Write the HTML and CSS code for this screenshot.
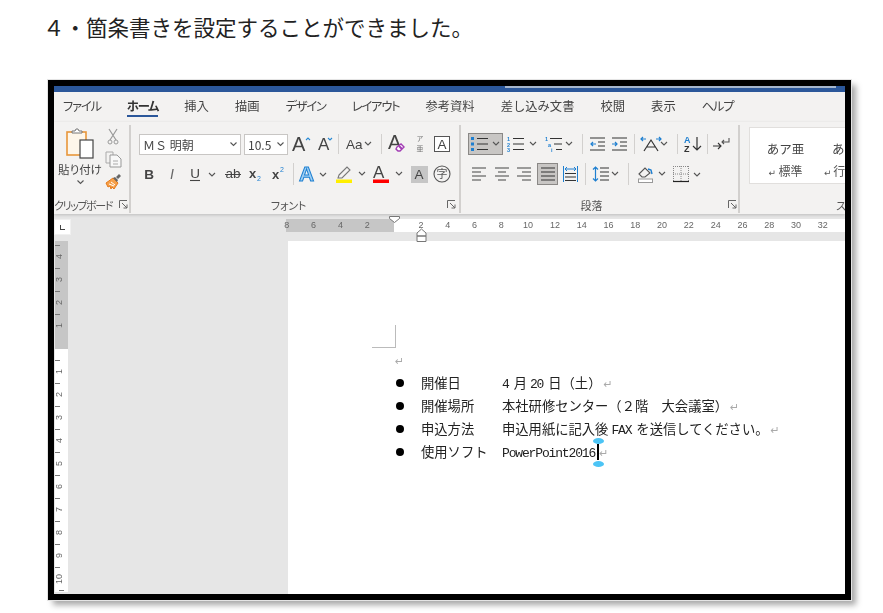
FILE: index.html
```html
<!doctype html>
<html lang="ja">
  <head>
    <meta charset="UTF-8" />
    <title>箇条書きの設定</title>
    <link rel="stylesheet" href="styles.css">
  </head>
  <body>
    <svg class="defs" width="0" height="0" aria-hidden="true">
      <defs>
        <path id="chev" d="M0 0l3 3 3-3" fill="none" stroke="#555" stroke-width="1.1" />
      </defs>
    </svg>

    <h1 class="step">４・箇条書きを設定することができました。</h1>

    <div class="window">
      <div class="window-body">
        <div class="titlebar"><div class="title-strip"></div></div>

        <nav class="tabs">
          <span class="kana">ファイル</span>
          <span class="kana tab-active">ホーム</span>
          <span>挿入</span>
          <span>描画</span>
          <span class="kana">デザイン</span>
          <span class="kana">レイアウト</span>
          <span>参考資料</span>
          <span>差し込み文書</span>
          <span>校閲</span>
          <span>表示</span>
          <span class="kana">ヘルプ</span>
        </nav>

        <div class="ribbon">
          <section class="group group-clip">
            <div class="clip-tools">
              <div class="paste">
                <svg width="28" height="31" viewBox="0 0 28 31">
                  <rect x="1" y="4" width="19" height="23" fill="#fdf6ea" stroke="#e8963a" stroke-width="1.6" />
                  <path d="M6 5V3h3l1-2h2l1 2h3v2z" fill="#fff" stroke="#777" />
                  <rect x="14" y="12" width="13" height="18" fill="#fff" stroke="#444" stroke-width="1.2" />
                </svg>
                <span class="paste-label">貼り付け</span>
                <svg width="7" height="5" viewBox="0 0 7 5"><use href="#chev" x="0.5" y="0.5" /></svg>
              </div>
              <div class="clip-small">
                <svg width="12" height="17" viewBox="0 0 12 17">
                  <path d="M2 1l7 11M10 1L3 12" fill="none" stroke="#9a9a9a" stroke-width="1.2" />
                  <circle cx="3" cy="14" r="2" fill="none" stroke="#9a9a9a" />
                  <circle cx="9" cy="14" r="2" fill="none" stroke="#9a9a9a" />
                </svg>
                <svg width="17" height="17" viewBox="0 0 17 17">
                  <path d="M5 12H1V1h7v3" fill="none" stroke="#aaa" />
                  <path d="M5 4h7l4 4v8H5z" fill="#f8f8f8" stroke="#999" />
                  <path d="M8 10h5M8 13h5" stroke="#aaa" />
                </svg>
                <svg width="17" height="16" viewBox="0 0 17 16">
                  <path d="M1 9l7-5 5 5-4 6-2-2-1 2-1-3-2 1z" fill="#f5a04a" stroke="#e67a1a" stroke-width="1" />
                  <path d="M4 10l5 2M6 8l4 3" stroke="#fff" />
                  <path d="M8 4l2-1 3 3-1 2zM11 3l3-3 2 2-3 3z" fill="#666" />
                </svg>
              </div>
            </div>
            <footer class="group-foot">
              <span></span>
              <span class="group-name name-clip">クリップボード</span>
              <svg class="launcher" width="9" height="9" viewBox="0 0 9 9"><path d="M.5 8V.5H8M3 3l5 5M8 4.5V8H4.5" fill="none" stroke="#666" /></svg>
            </footer>
          </section>

          <section class="group group-font">
            <div class="tool-row font-row-a">
              <div class="combo combo-font"><span>ＭＳ 明朝</span><svg width="7" height="5" viewBox="0 0 7 5"><use href="#chev" x="0.5" y="0.5" /></svg></div>
              <div class="combo combo-size"><span>10.5</span><svg width="7" height="5" viewBox="0 0 7 5"><use href="#chev" x="0.5" y="0.5" /></svg></div>
              <svg width="20" height="18" viewBox="0 0 20 18">
                <text x="0" y="16" class="glyph-lg">A</text>
                <path d="M14 5l2-2 2 2" fill="none" stroke="#2a8ad4" stroke-width="1.1" />
              </svg>
              <svg width="15" height="16" viewBox="0 0 15 16">
                <text x="0" y="14" class="glyph-md">A</text>
                <path d="M10 2l2 2 2-2" fill="none" stroke="#2a8ad4" stroke-width="1.1" />
              </svg>
              <i class="sep"></i>
              <svg width="26" height="16" viewBox="0 0 26 16">
                <text x="0" y="13" class="glyph-sm">Aa</text>
                <use href="#chev" x="19" y="6" />
              </svg>
              <i class="sep"></i>
              <svg width="17" height="18" viewBox="0 0 17 18">
                <text x="0" y="14" class="glyph-lg">A</text>
                <path d="M9 12l4-3 3 3-4 4h-2l-2-2z" fill="#fff" stroke="#a23cb4" stroke-width="1.4" />
                <path d="M11 11l3 3" stroke="#a23cb4" stroke-width="2" />
              </svg>
              <svg width="10" height="18" viewBox="0 0 10 18">
                <text x="5" y="6" class="glyph-ruby">ア</text>
                <text x="5" y="16" class="glyph-ruby">亜</text>
              </svg>
              <svg width="16" height="16" viewBox="0 0 16 16">
                <rect x=".5" y=".5" width="15" height="15" fill="#fff" stroke="#555" />
                <text x="8" y="12.5" class="glyph-sm glyph-mid">A</text>
              </svg>
            </div>
            <div class="tool-row font-row-b">
              <b class="glyph-b">B</b>
              <i class="glyph-i">I</i>
              <svg width="28" height="18" viewBox="0 0 28 18">
                <text x="7" y="13" class="glyph-sm glyph-mid">U</text>
                <path d="M2 15.5h10" stroke="#444" stroke-width="1.1" />
                <use href="#chev" x="21" y="8" />
              </svg>
              <svg width="16" height="14" viewBox="0 0 16 14">
                <text x="8" y="11" class="glyph-sm glyph-mid">ab</text>
                <path d="M0 7.5h16" stroke="#444" />
              </svg>
              <svg width="14" height="16" viewBox="0 0 14 16">
                <text x="0" y="12" class="glyph-x">x</text>
                <text x="8" y="15" class="glyph-idx">2</text>
              </svg>
              <svg width="13" height="16" viewBox="0 0 13 16">
                <text x="0" y="13" class="glyph-x">x</text>
                <text x="8" y="6" class="glyph-idx">2</text>
              </svg>
              <i class="sep sep-tall"></i>
              <svg width="28" height="18" viewBox="0 0 28 18">
                <text x="0" y="16" class="glyph-effect">A</text>
                <use href="#chev" x="21" y="8" />
              </svg>
              <svg width="29" height="18" viewBox="0 0 29 18">
                <path d="M3 10l8-8 3 3-8 8H2z" fill="none" stroke="#777" stroke-width="1.1" />
                <rect x="0" y="14.5" width="16" height="3.5" fill="#ffef00" />
                <use href="#chev" x="23" y="7" />
              </svg>
              <svg width="29" height="18" viewBox="0 0 29 18">
                <text x="0" y="13" class="glyph-thin">A</text>
                <rect x="0" y="14.5" width="16" height="3.5" fill="#f00" />
                <use href="#chev" x="23" y="7" />
              </svg>
              <span class="glyph-shade">A</span>
              <svg width="18" height="18" viewBox="0 0 18 18">
                <circle cx="9" cy="9" r="8" fill="none" stroke="#555" stroke-width="1.1" />
                <text x="9" y="13" class="glyph-circ">字</text>
              </svg>
            </div>
            <footer class="group-foot">
              <span></span>
              <span class="group-name name-font">フォント</span>
              <svg class="launcher" width="9" height="9" viewBox="0 0 9 9"><path d="M.5 8V.5H8M3 3l5 5M8 4.5V8H4.5" fill="none" stroke="#666" /></svg>
            </footer>
          </section>

          <section class="group group-para">
            <div class="tool-row para-row-a">
              <div class="btn-on btn-list">
                <svg width="29" height="14" viewBox="0 0 29 14">
                  <path d="M0 0h3v3H0zM0 5.500h3v3H0zM0 11h3v3H0z" fill="#1e7fd0" />
                  <path d="M6 1.500h11M6 7h11M6 12.500h11" stroke="#333" stroke-width="1.1" />
                  <use href="#chev" x="22" y="5" />
                </svg>
              </div>
              <svg width="30" height="16" viewBox="0 0 30 16">
                <text x="0" y="5" class="glyph-num">1</text>
                <text x="0" y="10.500" class="glyph-num">2</text>
                <text x="0" y="16" class="glyph-num">3</text>
                <path d="M6 2.500h11M6 8h11M6 13.500h11" stroke="#333" stroke-width="1.1" />
                <use href="#chev" x="23" y="6" />
              </svg>
              <svg width="28" height="16" viewBox="0 0 28 16">
                <text x="0" y="5" class="glyph-num">1</text>
                <text x="3" y="10.500" class="glyph-num">a</text>
                <text x="6" y="16" class="glyph-num">i</text>
                <path d="M5 2.500h12M9 8h8M11 13.500h6" stroke="#333" stroke-width="1.1" />
                <use href="#chev" x="21" y="6" />
              </svg>
              <i class="sep"></i>
              <svg width="15" height="14" viewBox="0 0 15 14">
                <path d="M0 1h15M8 5h7M8 9h7M0 13h15" stroke="#333" stroke-width="1.1" />
                <path d="M6 7H1m2-2L1 7l2 2" fill="none" stroke="#1e7fd0" stroke-width="1.2" />
              </svg>
              <svg width="15" height="14" viewBox="0 0 15 14">
                <path d="M0 1h15M8 5h7M8 9h7M0 13h15" stroke="#333" stroke-width="1.1" />
                <path d="M0 7h5m-2-2l2 2-2 2" fill="none" stroke="#1e7fd0" stroke-width="1.2" />
              </svg>
              <i class="sep"></i>
              <svg width="26" height="16" viewBox="0 0 26 16">
                <path d="M3 15l7-11 7 11M6 11h8" fill="none" stroke="#333" stroke-width="1.2" />
                <path d="M5 3H0m2-2L0 3l2 2M15 3h5m-2-2l2 2-2 2" fill="none" stroke="#1e7fd0" stroke-width="1.2" />
                <use href="#chev" x="20" y="6" />
              </svg>
              <i class="sep"></i>
              <svg width="17" height="16" viewBox="0 0 17 16">
                <text x="0" y="7" class="glyph-sort">A</text>
                <text x="0" y="16" class="glyph-sort glyph-sort-z">Z</text>
                <path d="M13 1v13m-4-4l4 4 4-4" fill="none" stroke="#333" stroke-width="1.2" />
              </svg>
              <i class="sep"></i>
              <svg width="17" height="14" viewBox="0 0 17 14">
                <path d="M0 9h8m-3-3l3 3-3 3" fill="none" stroke="#333" stroke-width="1.1" />
                <path d="M16 1v4H9m2-2L9 5l2 2" fill="none" stroke="#555" stroke-width="1.1" />
              </svg>
            </div>
            <div class="tool-row para-row-b">
              <svg width="14" height="14" viewBox="0 0 14 14"><path d="M0 1h14M0 5h9M0 9h14M0 13h9" stroke="#444" stroke-width="1.1" /></svg>
              <svg width="14" height="14" viewBox="0 0 14 14"><path d="M0 1h14M3 5h8M0 9h14M3 13h8" stroke="#444" stroke-width="1.1" /></svg>
              <svg width="14" height="14" viewBox="0 0 14 14"><path d="M0 1h14M5 5h9M0 9h14M5 13h9" stroke="#444" stroke-width="1.1" /></svg>
              <div class="btn-on btn-justify">
                <svg width="14" height="14" viewBox="0 0 14 14"><path d="M0 1h14M0 5h14M0 9h14M0 13h14" stroke="#333" stroke-width="1.1" /></svg>
              </div>
              <svg width="15" height="16" viewBox="0 0 15 16">
                <path d="M.5 0v16M14.500 0v16" stroke="#1e7fd0" />
                <path d="M2 3h11M4 1L2 3l2 2M11 1l2 2-2 2" fill="none" stroke="#1e7fd0" />
                <path d="M2 7.500h11M2 11h11M2 14.500h11" stroke="#333" stroke-width="1.1" />
              </svg>
              <i class="sep sep-tall"></i>
              <svg width="25" height="16" viewBox="0 0 25 16">
                <path d="M2.500 1v14M0 3.500L2.500 1 5 3.500M0 12.500L2.500 15 5 12.500" fill="none" stroke="#1e7fd0" stroke-width="1.2" />
                <path d="M7 2h9M7 6h9M7 10h9M7 14h9" stroke="#333" stroke-width="1.1" />
                <use href="#chev" x="19" y="6" />
              </svg>
              <i class="sep sep-tall"></i>
              <svg width="27" height="17" viewBox="0 0 27 17">
                <path d="M1 8l6-6 5 5-5 4H4z" fill="none" stroke="#555" stroke-width="1.1" />
                <path d="M10 3l3 1 1 4" fill="none" stroke="#1e7fd0" stroke-width="1.4" />
                <rect x=".5" y="13" width="14" height="3.500" fill="#fff" stroke="#999" />
                <use href="#chev" x="21" y="6" />
              </svg>
              <svg width="27" height="16" viewBox="0 0 27 16">
                <path d="M.5 0v16M15.500 0v16M8 0v16M0 .5h16M0 8h16" fill="none" stroke="#888" stroke-dasharray="1 1" />
                <path d="M0 15.500h16" stroke="#222" stroke-width="1.2" />
                <use href="#chev" x="21" y="7" />
              </svg>
            </div>
            <footer class="group-foot foot-para">
              <span></span>
              <span class="group-name">段落</span>
              <svg class="launcher" width="9" height="9" viewBox="0 0 9 9"><path d="M.5 8V.5H8M3 3l5 5M8 4.5V8H4.5" fill="none" stroke="#666" /></svg>
            </footer>
          </section>

          <section class="group group-style">
            <div class="gallery">
              <div class="style-cell">
                <span class="style-sample">あア亜</span>
                <span class="style-name"><small>↵</small> 標準</span>
              </div>
              <div class="style-cell style-cell-cut">
                <span class="style-sample">あ</span>
                <span class="style-name"><small>↵</small> 行</span>
              </div>
            </div>
            <footer class="style-foot"><span class="group-name">ス</span></footer>
          </section>
        </div>

        <div class="doc-area">
          <div class="hruler-row">
            <div class="corner"><span class="corner-mark"></span></div>
            <div class="hruler">
              <div class="hruler-margin">
                <span>8</span><span>6</span><span>4</span><span>2</span>
              </div>
              <div class="hruler-text">
                <span>2</span><span>4</span><span>6</span><span>8</span><span>10</span><span>12</span><span>14</span><span>16</span>
                <span>18</span><span>20</span><span>22</span><span>24</span><span>26</span><span>28</span><span>30</span><span>32</span>
              </div>
              <svg class="indent-first" width="11" height="7" viewBox="0 0 11 7"><path d="M.5.5h10v2l-5 4-5-4z" fill="#fff" stroke="#777" /></svg>
              <svg class="indent-hang" width="11" height="14" viewBox="0 0 11 14"><path d="M1 5l4.500-4L10 5v3H1zM1 8h9v5.500H1z" fill="#fff" stroke="#777" /></svg>
            </div>
          </div>

          <div class="doc-body">
            <div class="vruler">
              <div class="vruler-margin">
                <span>4</span><span>3</span><span>2</span><span>1</span><span class="vcell-end"></span>
              </div>
              <div class="vruler-text">
                <span>1</span><span>2</span><span>3</span><span>4</span><span>5</span><span>6</span><span>7</span><span>8</span><span>9</span><span>10</span>
              </div>
            </div>

            <main class="page">
              <div class="crop-mark"></div>
              <p class="para-empty"><span class="ret">↵</span></p>
              <ul class="items">
                <li><span class="item-label">開催日</span><span><span class="latin latin-lead">4</span>月<span class="latin">20</span>日（土）<span class="ret">↵</span></span></li>
                <li><span class="item-label">開催場所</span><span>本社研修センター（２階　大会議室）<span class="ret">↵</span></span></li>
                <li><span class="item-label">申込方法</span><span>申込用紙に記入後<span class="latin">FAX</span>を送信してください。<span class="ret">↵</span></span></li>
                <li><span class="item-label">使用ソフト</span><span><span class="latin latin-tight">PowerPoint2016</span><span class="caret"></span><span class="ret">↵</span></span></li>
              </ul>
            </main>
          </div>
        </div>
      </div>
    </div>
  </body>
</html>
```

FILE: styles.css
```css
:root {
  --word-blue: #2b579a;
  --ribbon: #f3f2f1;
  --workspace: #e6e6e6;
  --ink: #444;
  --ruler-grey: #c6c6c6;
}

* {
  margin: 0;
  padding: 0;
  box-sizing: border-box;
}

body {
  font-family: "Noto Sans CJK JP", "Liberation Sans", sans-serif;
  background-color: #fff;
  color: #222;
  width: 883px;
  height: 613px;
  overflow: hidden;
}

.defs {
  display: block;
  height: 0;
}

.step {
  font-size: 21.5px;
  font-weight: 400;
  line-height: 54px;
  height: 54px;
  margin-left: 43px;
  color: #222;
}

.window {
  width: 803px;
  height: 520px;
  margin: 26px 0 0 48px;
  border: 6px solid #000;
  box-shadow: 0 0 0 1px #e4e4e4, 5px 5px 6px rgba(0, 0, 0, 0.35);
}

.window-body {
  width: 791px;
  height: 508px;
  overflow: hidden;
  display: flex;
  flex-direction: column;
  filter: blur(0.4px);
  background-color: var(--workspace);
}

.titlebar {
  height: 6px;
  flex: none;
  background-color: var(--word-blue);
  padding-left: 451px;
}

.title-strip {
  width: 331px;
  height: 2px;
  background-color: #a6b6cc;
}

/* tabs */
.tabs {
  height: 30px;
  flex: none;
  display: flex;
  align-items: center;
  gap: 26px;
  padding: 0 0 2px 9px;
  background-color: var(--ribbon);
  color: var(--ink);
  font-size: 12.3px;
}

.kana {
  font-feature-settings: "palt";
  letter-spacing: -1.2px;
}

.tab-active {
  position: relative;
  font-weight: 700;
  color: #333;
}

.tab-active::after {
  content: "";
  position: absolute;
  left: 0;
  right: 0;
  bottom: -2px;
  height: 2.5px;
  background-color: var(--word-blue);
}

/* ribbon */
.ribbon {
  height: 92px;
  flex: none;
  display: flex;
  background-color: var(--ribbon);
  box-shadow: 0 1px 3px rgba(0, 0, 0, 0.18);
  color: var(--ink);
  position: relative;
}

.group {
  display: flex;
  flex-direction: column;
  height: 88px;
  margin-top: 3px;
  border-right: 2px solid #d2d0ce;
  flex: none;
}

.group-clip {
  width: 77px;
}

.group-font {
  width: 330px;
  padding: 8px 8px 0;
}

.group-para {
  width: 279px;
  padding: 8px 6px 0 7px;
}

.group-style {
  width: 105px;
  border-right: none;
  overflow: hidden;
}

.group-foot {
  margin-top: auto;
  height: 17px;
  display: grid;
  grid-template-columns: 1fr auto 1fr;
  align-items: center;
}

.group-name {
  font-size: 11px;
  font-feature-settings: "palt";
  color: #555;
  white-space: nowrap;
}

.name-clip {
  letter-spacing: -1.4px;
}

.name-font {
  letter-spacing: -0.2px;
  margin-right: 18px;
}

.launcher {
  justify-self: end;
}

.group-clip .group-foot {
  padding-right: 1px;
  grid-template-columns: 0 auto 1fr;
}

.group-font .group-foot {
  margin-right: -5px;
}

.foot-para {
  margin-right: -5px;
}

.foot-para .group-name {
  margin-right: 22px;
}

/* clipboard */
.clip-tools {
  display: flex;
  height: 66px;
}

.paste {
  width: 50px;
  display: flex;
  flex-direction: column;
  align-items: center;
  padding: 3px 0 0 2px;
}

.paste-label {
  font-size: 11.5px;
  font-feature-settings: "palt";
  line-height: 14px;
  margin: 3px 0 4px;
  color: #444;
  white-space: nowrap;
}

.clip-small {
  width: 18px;
  padding-top: 3px;
  display: flex;
  flex-direction: column;
  align-items: center;
  gap: 6px;
}

/* tool rows */
.tool-row {
  display: grid;
  justify-items: center;
  align-items: center;
}

.tool-row svg {
  overflow: visible;
}

.font-row-a {
  height: 22px;
  grid-template-columns: 102px 47px 27px 20px 6px 36px 8px 22px 26px 18px;
}

.font-row-b {
  height: 22px;
  margin-top: 8px;
  grid-template-columns: 20px 26px 34px 28px 18px 26px 4px 36px 39px 35px 28px 18px;
}

.para-row-a {
  height: 22px;
  grid-template-columns: 35px 38px 36px 10px 21px 23px 6px 34px 12px 19px 10px 19px;
}

.para-row-b {
  height: 22px;
  margin-top: 8px;
  grid-template-columns: 22px 23px 22px 25px 21px 8px 33px 12px 34px 37px;
}

.sep {
  display: block;
  width: 1px;
  height: 20px;
  background-color: #d2d0ce;
}

.sep-tall {
  height: 22px;
}

.combo {
  height: 21px;
  display: flex;
  align-items: center;
  justify-content: space-between;
  background-color: #fff;
  border: 1px solid #c8c6c4;
  padding: 0 3px;
  font-size: 12px;
  color: #444;
}

.combo-font {
  width: 102px;
}

.combo-size {
  width: 44px;
  justify-self: end;
}

.btn-on {
  background-color: #c8c6c4;
  border: 1px solid #8a8886;
  display: flex;
  align-items: center;
  justify-content: center;
}

.btn-list {
  width: 35px;
  height: 22px;
}

.btn-justify {
  width: 21px;
  height: 22px;
}

/* letters inside the ribbon icons */
.tool-row text {
  font-family: "Liberation Sans", sans-serif;
  fill: #444;
}

.glyph-lg {
  font-size: 20px;
}

.glyph-md {
  font-size: 17px;
}

.glyph-sm {
  font-size: 13.5px;
}

.glyph-mid {
  text-anchor: middle;
}

.tool-row .glyph-ruby {
  font-family: "Noto Sans CJK JP", sans-serif;
  font-size: 6.8px;
  text-anchor: middle;
  fill: #777;
}

.glyph-b {
  font: 700 13.5px "Liberation Sans", sans-serif;
  color: #444;
}

.glyph-i {
  font: italic 400 14px "Liberation Sans", sans-serif;
  color: #666;
}

.glyph-x {
  font-size: 13px;
  font-weight: 700;
}

.tool-row .glyph-idx {
  font-size: 7px;
  fill: #1e7fd0;
}

.tool-row .glyph-effect {
  font-size: 21px;
  font-weight: 700;
  fill: #9fd0f5;
  stroke: #1e7fd0;
  stroke-width: 1;
}

.glyph-thin {
  font-size: 17px;
}

.glyph-shade {
  width: 17px;
  height: 17px;
  background-color: #c6c6c6;
  font: 400 13.5px/17px "Liberation Sans", sans-serif;
  text-align: center;
  color: #444;
}

.tool-row .glyph-circ {
  font-family: "Noto Sans CJK JP", sans-serif;
  font-size: 11px;
  text-anchor: middle;
  fill: #555;
}

.tool-row .glyph-num {
  font-size: 5.5px;
  font-weight: 700;
  fill: #1e7fd0;
}

.tool-row .glyph-sort {
  font-size: 9px;
  font-weight: 700;
  fill: #1e7fd0;
}

.tool-row .glyph-sort-z {
  fill: #333;
}

/* style gallery */
.gallery {
  width: 96px;
  height: 57px;
  margin: 2px 0 0 9px;
  background-color: #fff;
  border: 1px solid #e1dfdd;
  border-right: none;
  display: flex;
  padding-left: 1px;
}

.style-cell {
  width: 69px;
  flex: none;
  display: flex;
  flex-direction: column;
  align-items: center;
  white-space: nowrap;
  padding-top: 11px;
}

.style-cell-cut {
  width: 25px;
  align-items: flex-start;
  padding-left: 4px;
}

.style-cell-cut .style-sample {
  margin-left: 8px;
}

.style-cell-cut .style-name small {
  letter-spacing: -1px;
}

.style-sample {
  font-size: 12.5px;
  line-height: 20px;
  color: #444;
}

.style-name {
  margin-top: 3px;
  font-size: 12px;
  line-height: 18px;
  color: #555;
}

.style-name small {
  font: 9px "DejaVu Sans", sans-serif;
}

.style-foot {
  margin-top: auto;
  height: 17px;
  padding-left: 96px;
  display: flex;
  align-items: center;
}

/* rulers and page */
.doc-area {
  flex: 1;
  display: flex;
  flex-direction: column;
  min-height: 0;
}

.hruler-row {
  height: 27px;
  flex: none;
  display: flex;
  align-items: flex-start;
  padding-top: 5px;
}

.corner {
  width: 17px;
  height: 16px;
  background-color: #fff;
  border: 1px solid #f0f0f0;
  display: flex;
  align-items: center;
  justify-content: center;
}

.corner-mark {
  width: 5px;
  height: 5px;
  border-left: 1.5px solid #444;
  border-bottom: 1.5px solid #444;
}

.hruler {
  position: relative;
  flex: 1;
  height: 13px;
  margin-left: 215px;
  display: flex;
  font: 9px/13px "Liberation Sans", sans-serif;
  color: #666;
}

.hruler-margin {
  width: 108px;
  flex: none;
  display: flex;
  justify-content: flex-end;
  padding-right: 13.4px;
  background-color: var(--ruler-grey);
}

.hruler-text {
  flex: 1;
  display: flex;
  padding-left: 13.5px;
  background-color: #fff;
}

.hruler span {
  width: 26.8px;
  flex: none;
  text-align: center;
}

.indent-first {
  position: absolute;
  left: 103px;
  top: -3px;
}

.indent-hang {
  position: absolute;
  left: 130px;
  top: 9px;
}

.doc-body {
  flex: 1;
  display: flex;
  min-height: 0;
}

.vruler {
  width: 13px;
  margin-left: 1px;
  flex: none;
  display: flex;
  flex-direction: column;
  font: 9px/1 "Liberation Sans", sans-serif;
  color: #666;
}

.vruler-margin {
  height: 108px;
  flex: none;
  padding-top: 4px;
  background-color: var(--ruler-grey);
  overflow: hidden;
}

.vruler-text {
  flex: 1;
  padding-top: 11px;
  background-color: #fff;
  overflow: hidden;
  border-bottom: 2px solid var(--workspace);
}

.vruler span {
  position: relative;
  display: flex;
  align-items: center;
  justify-content: center;
  height: 23px;
  writing-mode: vertical-rl;
  transform: rotate(180deg);
}

.vruler span::before {
  content: "";
  position: absolute;
  left: 4px;
  bottom: 0;
  width: 5px;
  height: 1px;
  background-color: #777;
}

.vruler .vcell-end {
  height: 12px;
}

.vruler-text::after {
  content: "";
  display: block;
  width: 5px;
  height: 1px;
  margin-left: 4px;
  background-color: #777;
}

.page {
  flex: 1;
  margin-left: 220px;
  padding: 84px 0 0 84px;
  background-color: #fff;
  font-size: 13.3px;
  line-height: 23px;
  color: #222;
}

.crop-mark {
  width: 24px;
  height: 23px;
  border-right: 1px solid #bbb;
  border-bottom: 1px solid #bbb;
}

.para-empty {
  padding-left: 21px;
  height: 23px;
}

.ret {
  font: 11px "DejaVu Sans", sans-serif;
  color: #aaa;
  margin-left: 2px;
}

.items {
  list-style: none;
  margin-left: 21px;
}

.items li {
  display: grid;
  grid-template-columns: 28px 81px auto;
  align-items: center;
  height: 23px;
  white-space: nowrap;
}

.items li::before {
  content: "";
  width: 8px;
  height: 8px;
  margin-left: 3px;
  border-radius: 50%;
  background-color: #000;
}

.latin {
  font: 13px "Liberation Mono", monospace;
  letter-spacing: -1.15px;
  margin: 0 5px 0 3px;
}

.latin-lead {
  margin-left: 0;
}

.latin-tight {
  margin: 0;
}

.caret {
  position: relative;
  display: inline-block;
  width: 2px;
  height: 16px;
  margin: 0 -2px 0 2px;
  vertical-align: -3px;
  background-color: #000;
}

.caret::before,
.caret::after {
  content: "";
  position: absolute;
  left: -4.5px;
  width: 11px;
  height: 6px;
  border-radius: 50%;
  background-color: #4cc4f5;
}

.caret::before {
  top: -6px;
}

.caret::after {
  bottom: -7px;
}
```
